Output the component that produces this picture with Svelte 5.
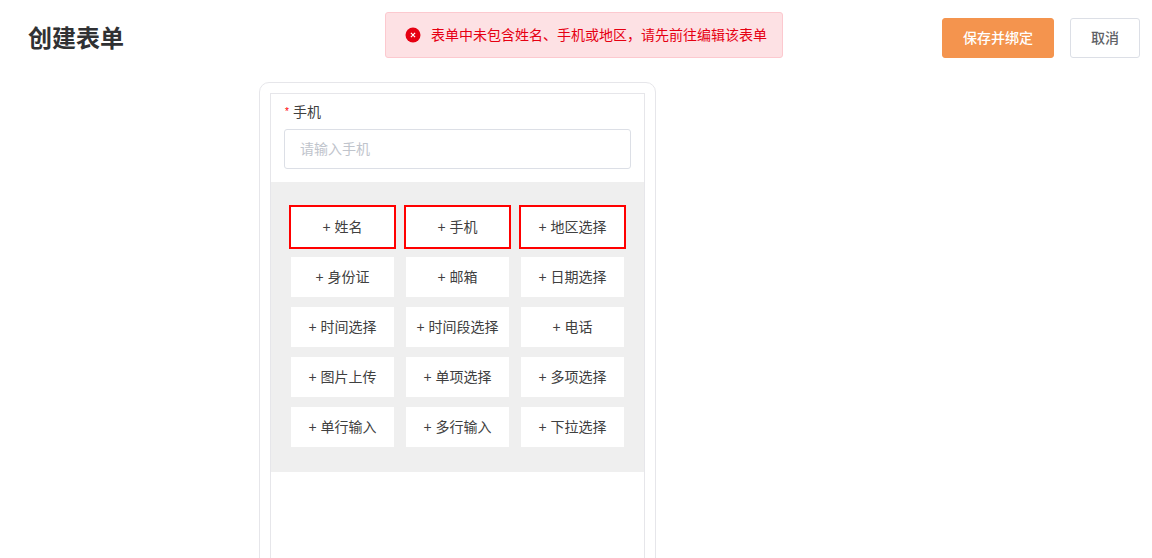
<script>
	const required = ['姓名', '手机', '地区选择'];
	const others = [
		'身份证', '邮箱', '日期选择',
		'时间选择', '时间段选择', '电话',
		'图片上传', '单项选择', '多项选择',
		'单行输入', '多行输入', '下拉选择'
	];
</script>

<div class="page">
	<header class="header">
		<h1 class="title">创建表单</h1>
		<div class="actions">
			<button class="btn primary">保存并绑定</button>
			<button class="btn plain">取消</button>
		</div>
	</header>

	<div class="toast">
		<svg class="toast-icon" width="16" height="16" viewBox="0 0 16 16">
			<circle cx="8" cy="8" r="7.5" fill="#e60012" />
			<path d="M5.9 5.9l4.2 4.2M10.1 5.9l-4.2 4.2" stroke="#fff" stroke-width="1.2" fill="none" />
		</svg>
		<span class="toast-text">表单中未包含姓名、手机或地区，请先前往编辑该表单</span>
	</div>

	<div class="card">
		<div class="form">
			<div class="field">
				<div class="label"><span class="star">*</span>手机</div>
				<input class="input" placeholder="请输入手机" />
			</div>
			<div class="palette">
				{#each required as name}
					<button class="item required">+ {name}</button>
				{/each}
				{#each others as name}
					<button class="item">+ {name}</button>
				{/each}
			</div>
		</div>
	</div>
</div>

<style>
	:global(body) {
		margin: 0;
		background: #fff;
	}

	.page {
		position: relative;
		height: 558px;
		overflow: hidden;
		font-family: "Liberation Sans", "Noto Sans CJK SC", sans-serif;
		color: #303133;
	}

	.header {
		display: flex;
		justify-content: space-between;
		align-items: center;
		height: 40px;
		padding: 18px 12px 0 28px;
	}

	.title {
		margin: 0;
		font-size: 24px;
		font-weight: 700;
		line-height: 40px;
		position: relative;
		top: 1px;
	}

	.actions {
		display: flex;
		gap: 16px;
	}

	.btn {
		height: 40px;
		border-radius: 3px;
		font-family: inherit;
		font-size: 14px;
		padding: 0 0 2px;
	}

	.primary {
		width: 112px;
		background: #f4944e;
		border: 1px solid #f4944e;
		color: #fff;
		font-weight: 500;
	}

	.plain {
		width: 70px;
		background: #fff;
		border: 1px solid #dcdfe6;
		color: #606266;
		font-weight: 500;
	}

	.toast {
		position: absolute;
		left: 385px;
		top: 12px;
		box-sizing: border-box;
		width: 398px;
		height: 46px;
		display: flex;
		align-items: center;
		padding-left: 19px;
		gap: 10px;
		background: #fde1e4;
		border: 1px solid #fcc9cf;
		border-radius: 3px;
		font-size: 14px;
		color: #e60012;
	}

	.toast-icon {
		flex: none;
	}

	.toast-text {
		padding-bottom: 2px;
	}

	.card {
		box-sizing: border-box;
		width: 397px;
		margin: 24px 0 0 259px;
		padding: 10px;
		height: 600px;
		border: 1px solid #e6e6ea;
		border-radius: 10px;
	}

	.form {
		box-sizing: border-box;
		width: 375px;
		height: 580px;
		border: 1px solid #e6e6ea;
	}

	.field {
		padding: 7px 13px 13px 13px;
	}

	.label {
		display: flex;
		align-items: center;
		height: 20px;
		margin-bottom: 8px;
		font-size: 14px;
		color: #404040;
	}

	.star {
		color: #f00;
		font-size: 10px;
		width: 9px;
		padding-left: 1px;
		box-sizing: border-box;
	}

	.input {
		display: block;
		box-sizing: border-box;
		width: 347px;
		height: 40px;
		padding: 0 15px;
		border: 1px solid #dcdfe6;
		border-radius: 3px;
		font-family: inherit;
		font-size: 14px;
		outline: none;
	}

	.input::placeholder {
		color: #c0c4cc;
		opacity: 1;
	}

	.palette {
		display: grid;
		grid-template-columns: repeat(3, 103px);
		grid-auto-rows: 40px;
		gap: 10px 12px;
		padding: 25px 20px;
		background: #efefef;
	}

	.item {
		background: #fff;
		border: none;
		padding: 0 0 2px;
		font-family: inherit;
		font-size: 14px;
		color: #404040;
	}

	.required {
		outline: 2px solid #f00;
	}
</style>
